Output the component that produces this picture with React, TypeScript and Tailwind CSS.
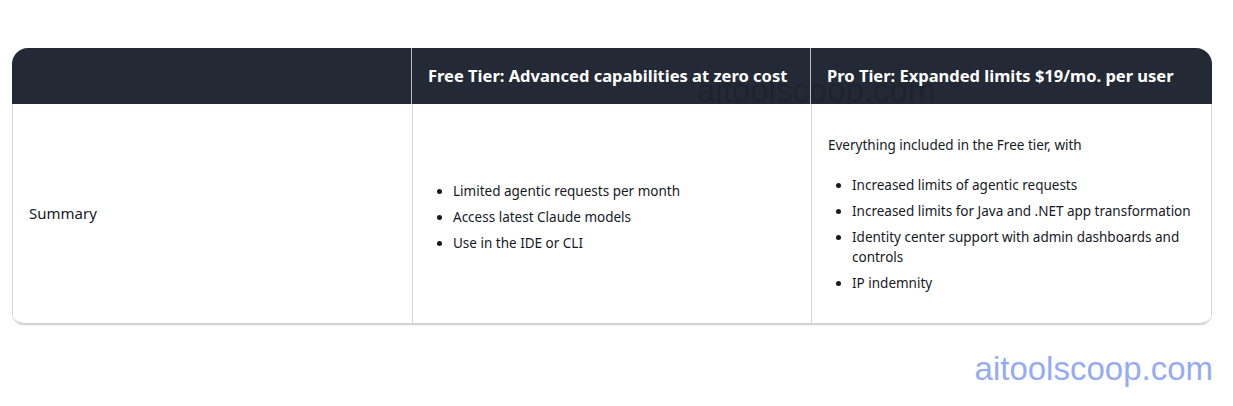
import React from 'react';

const freeItems = [
  'Limited agentic requests per month',
  'Access latest Claude models',
  'Use in the IDE or CLI',
];

const proItems = [
  'Increased limits of agentic requests',
  'Increased limits for Java and .NET app transformation',
  'Identity center support with admin dashboards and controls',
  'IP indemnity',
];

function BulletList({ items }: { items: string[] }) {
  return (
    <ul className="list-disc pl-6 space-y-[6px]">
      {items.map((item) => (
        <li key={item} className="leading-5">
          {item}
        </li>
      ))}
    </ul>
  );
}

export default function App() {
  return (
    <div
      className="w-[1233px] h-[406px] bg-white relative"
      style={{ fontFamily: '"Noto Sans", "Open Sans", sans-serif' }}
    >
      <div className="pt-12 pl-3">
        <div className="w-[1200px] rounded-t-2xl rounded-b-xl overflow-hidden border-b-2 border-[#d5d5d5] shadow-[0_1px_1px_rgba(0,0,0,0.06)]">
          {/* Header */}
          <div className="relative h-14 bg-[#232a35] overflow-hidden">
            <span
              className="absolute left-[685px] top-[26px] text-[33px] leading-none text-[#1e242d]"
              style={{ fontFamily: '"Liberation Sans", Arial, sans-serif' }}
            >
              aitoolscoop.com
            </span>
            <div className="relative grid grid-cols-[400px_399px_401px] h-14 text-white font-bold text-[16.5px]">
              <div className="border-r border-[#b9bcc1]"></div>
              <div className="flex items-center px-4 border-r border-[#b9bcc1]">
                Free Tier: Advanced capabilities at zero cost
              </div>
              <div className="flex items-center px-4">
                Pro Tier: Expanded limits $19/mo. per user
              </div>
            </div>
          </div>

          {/* Body */}
          <div className="grid grid-cols-[400px_399px_401px] h-[219px] text-[13.5px] text-[#16191f] border-x border-[#d5d5d5]">
            <div className="flex items-center px-4 border-r border-[#d5d5d5] text-[15px]">
              Summary
            </div>
            <div className="flex items-center px-4 pt-1.5 border-r border-[#d5d5d5]">
              <BulletList items={freeItems} />
            </div>
            <div className="flex flex-col justify-center px-4">
              <p className="leading-5 mb-5">Everything included in the Free tier, with</p>
              <BulletList items={proItems} />
            </div>
          </div>
        </div>
      </div>

      <span
        className="absolute right-[20px] top-[349px] text-[33px] leading-10 text-[#95abf6]"
        style={{ fontFamily: '"Liberation Sans", Arial, sans-serif' }}
      >
        aitoolscoop.com
      </span>
    </div>
  );
}
